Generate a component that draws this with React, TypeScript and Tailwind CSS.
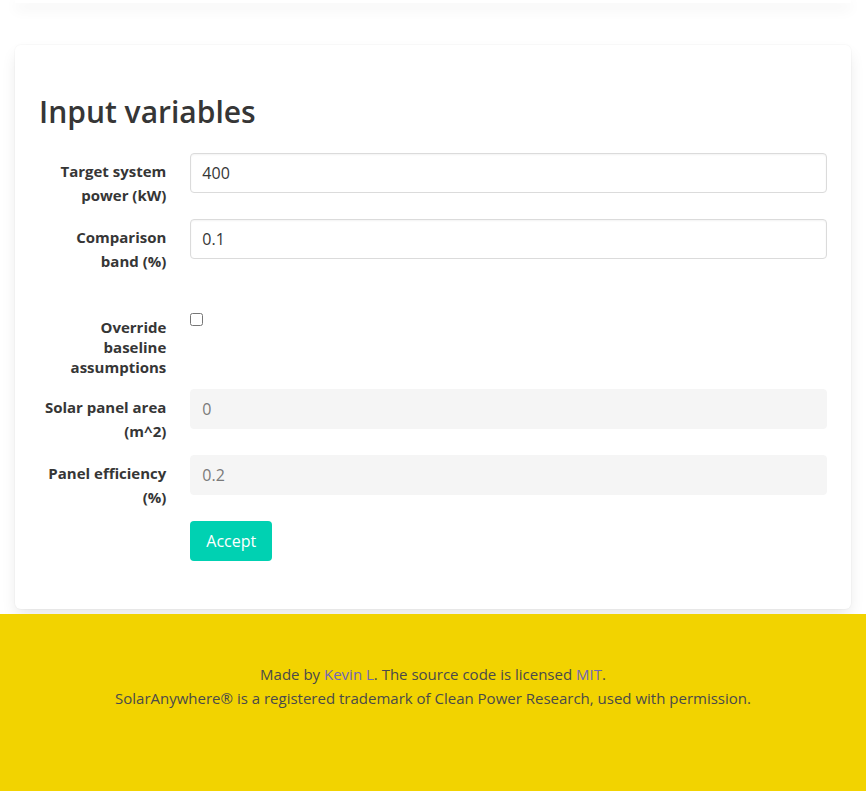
import React from "react";

const font = { fontFamily: '"Open Sans", "Noto Sans", sans-serif' };

function Label({ children, tight }: { children: React.ReactNode; tight?: boolean }) {
  return (
    <div
      className={
        tight
          ? "basis-0 grow text-right font-bold text-[15px] leading-[20px] text-[#363636] mr-6 pt-[5px]"
          : "basis-0 grow text-right font-bold text-[15px] leading-[24px] text-[#363636] mr-6 pt-[6px]"
      }
    >
      {children}
    </div>
  );
}

function Field({ label, value, disabled }: { label: React.ReactNode; value: string; disabled?: boolean }) {
  return (
    <div className="flex items-start mb-3">
      <Label>{label}</Label>
      <div className="basis-0 grow-[5]">
        <input
          readOnly
          disabled={disabled}
          value={value}
          className={
            disabled
              ? "w-full h-10 rounded border border-[#f5f5f5] bg-[#f5f5f5] px-[11px] text-base text-[#7a7a7a] outline-none"
              : "w-full h-10 rounded border border-[#dbdbdb] bg-white px-[11px] text-base text-[#363636] outline-none shadow-[inset_0_0.0625em_0.125em_rgba(10,10,10,0.05)]"
          }
          style={font}
        />
      </div>
    </div>
  );
}

export default function App() {
  return (
    <div className="bg-white min-h-screen" style={font}>
      <div className="h-[3px] mx-[15px] bg-white shadow-[0_5px_14px_rgba(10,10,10,0.12)]" />
      <div className="mx-[15px] mt-[42px] rounded-md bg-white px-6 pt-12 pb-12 shadow-[0_0.5em_1em_-0.125em_rgba(10,10,10,0.1),0_0_0_1px_rgba(10,10,10,0.02)]">
        <h1 className="text-[30px] leading-[36px] font-semibold text-[#363636] mb-[23px] pt-[1px]">Input variables</h1>
        <Field label={<>Target system<br />power (kW)</>} value="400" />
        <Field label={<>Comparison<br />band (%)</>} value="0.1" />
        <div className="flex items-start mb-3 mt-[39px]">
          <Label tight>
            Override
            <br />
            baseline
            <br />
            assumptions
          </Label>
          <div className="basis-0 grow-[5] pt-[1px]">
            <input type="checkbox" className="w-[13px] h-[13px] m-0 align-top" />
          </div>
        </div>
        <Field label={<>Solar panel area<br />(m^2)</>} value="0" disabled />
        <Field label={<>Panel efficiency<br />(%)</>} value="0.2" disabled />
        <div className="flex">
          <div className="basis-0 grow mr-6" />
          <div className="basis-0 grow-[5]">
            <button className="h-10 px-4 rounded bg-[#00d1b2] text-white text-base">Accept</button>
          </div>
        </div>
      </div>
      <footer className="mt-[5px] bg-[#f2d300] pt-12 pb-24 px-6 text-center text-[15px] leading-6 text-[#4a4a4a]">
        <p>
          Made by <a className="text-[#6f66b8]">Kevin L</a>. The source code is licensed{" "}
          <a className="text-[#6f66b8]">MIT</a>.
        </p>
        <p>SolarAnywhere® is a registered trademark of Clean Power Research, used with permission.</p>
      </footer>
    </div>
  );
}
